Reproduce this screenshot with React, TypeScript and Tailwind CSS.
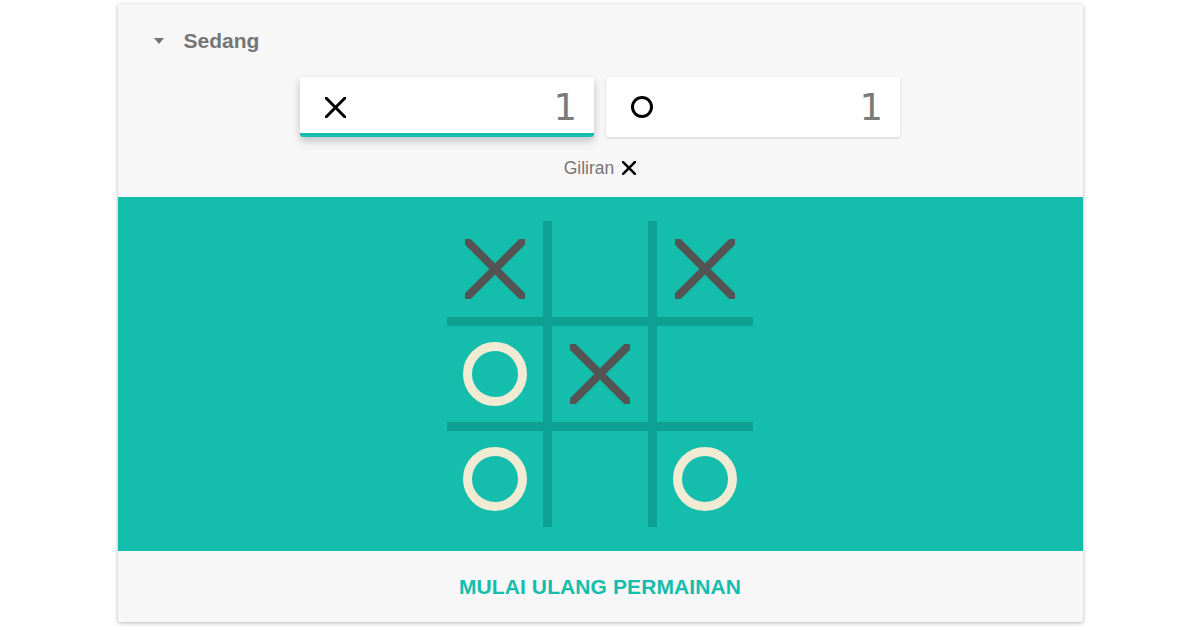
import React from 'react'

type Mark = 'x' | 'o' | null

const board: Mark[] = ['x', null, 'x', 'o', 'x', null, 'o', null, 'o']

const XMark = ({ size, stroke, color }: { size: number; stroke: number; color: string }) => (
  <svg width={size} height={size} viewBox={`0 0 ${size} ${size}`}>
    <line x1={0} y1={0} x2={size} y2={size} stroke={color} strokeWidth={stroke} />
    <line x1={size} y1={0} x2={0} y2={size} stroke={color} strokeWidth={stroke} />
  </svg>
)

const OMark = ({ size, stroke, color }: { size: number; stroke: number; color: string }) => (
  <svg width={size} height={size} viewBox={`0 0 ${size} ${size}`}>
    <circle cx={size / 2} cy={size / 2} r={(size - stroke) / 2} fill="none" stroke={color} strokeWidth={stroke} />
  </svg>
)

const ScoreCard = ({ mark, score, active }: { mark: 'x' | 'o'; score: number; active?: boolean }) => (
  <div
    className={
      'flex h-[60px] w-[294px] items-center justify-between rounded-[3px] bg-white pl-[25px] pr-[17px] ' +
      (active
        ? 'border-b-[4px] border-[#14bdac] shadow-[0_4px_8px_rgba(0,0,0,0.22)]'
        : 'shadow-[0_1px_3px_rgba(0,0,0,0.16)]')
    }
  >
    {mark === 'x' ? (
      <div className={active ? 'mt-[4px]' : ''}>
        <XMark size={21} stroke={3} color="#000" />
      </div>
    ) : (
      <OMark size={22} stroke={3} color="#000" />
    )}
    <span
      className={'text-[37px] leading-none font-normal text-[#7a7a7a] ' + (active ? 'mt-[4px]' : '')}
      style={{ fontFamily: '"DejaVu Sans", sans-serif' }}
    >
      {score}
    </span>
  </div>
)

export default function App() {
  return (
    <div className="min-h-screen bg-white pt-[4px]" style={{ fontFamily: '"Liberation Sans", Arial, sans-serif' }}>
      <div className="mx-auto w-[965px] overflow-hidden rounded-[2px] bg-[#f7f7f7] shadow-[0_1px_4px_rgba(0,0,0,0.3)]">
        {/* header */}
        <div className="flex flex-col pt-[24px] pb-[17px]">
          <div className="flex h-[26px] items-center pl-[36px]">
            <span className="h-0 w-0 border-x-[5.5px] border-t-[6px] border-x-transparent border-t-[#757575]" />
            <span className="ml-[20px] text-[21px] font-bold text-[#757575]">Sedang</span>
          </div>
          <div className="mt-[23px] flex justify-center gap-[12px]">
            <ScoreCard mark="x" score={1} active />
            <ScoreCard mark="o" score={1} />
          </div>
          <div className="mt-[19px] flex h-[24px] items-center justify-center gap-[8px]">
            <span className="text-[17.5px] text-[#757575]">Giliran</span>
            <XMark size={14} stroke={2.5} color="#000" />
          </div>
        </div>

        {/* board */}
        <div className="flex h-[354px] items-center justify-center bg-[#14bdac]">
          <div className="grid grid-cols-[105px_105px_96px] grid-rows-[105px_105px_96px]">
            {board.map((m, i) => {
              const col = i % 3
              const row = Math.floor(i / 3)
              return (
                <div
                  key={i}
                  className={
                    'flex items-center justify-center border-[#0ea193] ' +
                    (col < 2 ? 'border-r-[9px] ' : '') +
                    (row < 2 ? 'border-b-[9px]' : '')
                  }
                >
                  {m === 'x' && <XMark size={60} stroke={8} color="#545454" />}
                  {m === 'o' && <OMark size={64} stroke={9} color="#f2ebd3" />}
                </div>
              )
            })}
          </div>
        </div>

        {/* footer */}
        <div className="flex h-[71px] items-center justify-center">
          <button className="text-[21px] font-bold tracking-[0.1px] text-[#14bdac]">MULAI ULANG PERMAINAN</button>
        </div>
      </div>
    </div>
  )
}
